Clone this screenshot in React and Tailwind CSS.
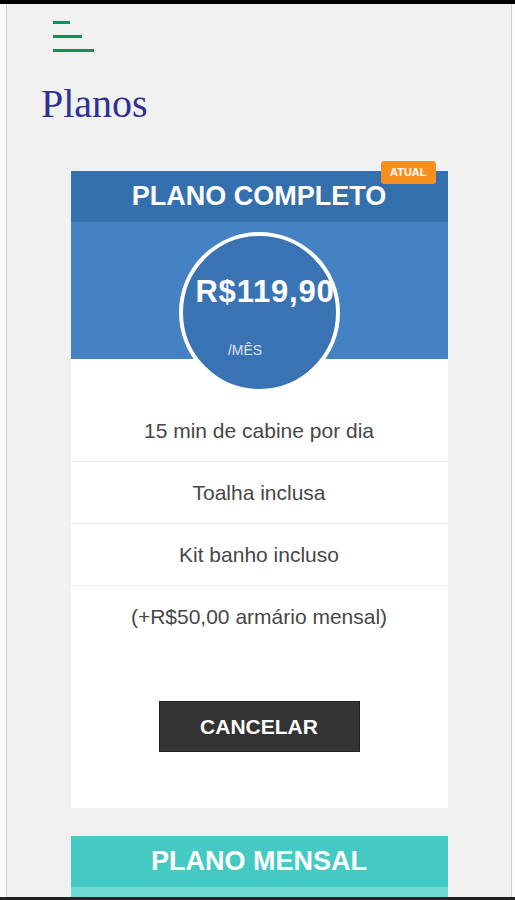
import React from 'react';

const plans = [
  {
    name: 'PLANO COMPLETO',
    price: 'R$119,90',
    current: true,
    head: 'bg-[#346fae]',
    body: 'bg-[#4482c3]',
    ring: 'bg-[#3a73b4]',
    features: ['15 min de cabine por dia', 'Toalha inclusa', 'Kit banho incluso', '(+R$50,00 armário mensal)'],
  },
  {
    name: 'PLANO MENSAL',
    price: null,
    current: false,
    head: 'bg-[#45c9c3]',
    body: 'bg-[#70dad4]',
    ring: 'bg-[#4fcdc7]',
    features: [],
  },
];

function PlanCard({ plan }) {
  return (
    <div className="relative mx-auto w-[377px] bg-white shrink-0">
      {plan.current && (
        <span className="absolute right-[12px] top-[-10px] z-20 rounded-[3px] bg-[#f7901e] px-[9px] py-[6px] text-[11px] font-bold leading-none text-white">
          ATUAL
        </span>
      )}
      <div className={`${plan.head} flex h-[51px] items-center justify-center`}>
        <h2 className="text-[27px] font-bold leading-none text-white">{plan.name}</h2>
      </div>
      <div className={`${plan.body} h-[137px] pt-[10px]`}>
        <div className={`${plan.ring} relative z-10 mx-auto flex h-[161px] w-[161px] flex-col items-center rounded-full border-4 border-white pt-[40px]`}>
          {plan.price && (
            <>
              <p className="pl-[12px] text-[31px] font-bold leading-none tracking-[0.8px] text-white">{plan.price}</p>
              <p className="mt-[36px] pr-[28px] text-[14px] leading-none text-white/80">/MÊS</p>
            </>
          )}
        </div>
      </div>
      {plan.features.length > 0 && (
        <>
          <div className="pt-[41px]">
            {plan.features.map((f, i) => (
              <div key={f}>
                <div className="flex h-[61px] items-center justify-center text-[21px] text-[#474747]">{f}</div>
                {i < plan.features.length - 1 && <div className="h-[1px] bg-[#ebebeb]" />}
              </div>
            ))}
          </div>
          <div className="flex justify-center pb-[56px] pt-[54px]">
            <button className="h-[51px] w-[201px] border border-[#222] bg-[#333333] text-[21px] font-bold text-white">
              CANCELAR
            </button>
          </div>
        </>
      )}
    </div>
  );
}

export default function App() {
  return (
    <div className="flex h-[900px] flex-col overflow-hidden bg-[#fafafa] font-['Liberation_Sans',Arial,sans-serif]">
      <div className="h-1 shrink-0 bg-black" />
      <div className="flex-1 overflow-hidden pl-[6px] pr-[3px]">
        <div className="h-full border-x border-[#cfcfcf] bg-[#f1f1f1]">
          {/* menu */}
          <div className="flex flex-col gap-[11px] pl-[46px] pt-[17px]">
            <span className="h-[3px] w-[17px] bg-[#0a9456]" />
            <span className="h-[3px] w-[29px] bg-[#0a9456]" />
            <span className="h-[3px] w-[41px] bg-[#0a9456]" />
          </div>
          <h1 className="mt-[32px] pl-[34px] font-['Liberation_Serif',serif] text-[40px] leading-none text-[#2e3192]">
            Planos
          </h1>
          <div className="mt-[47px] flex flex-col gap-[28px]">
            {plans.map((p) => (
              <PlanCard key={p.name} plan={p} />
            ))}
          </div>
        </div>
      </div>
      <div className="h-[3px] shrink-0 bg-[#222]" />
    </div>
  );
}
